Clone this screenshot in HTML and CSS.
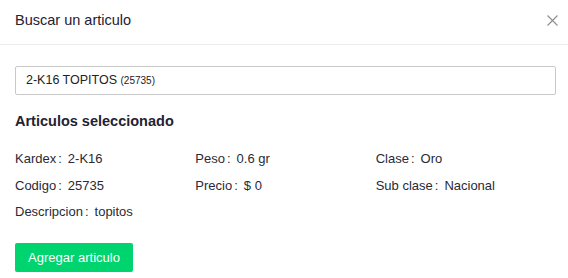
FILE: index.html
```html
<!DOCTYPE html>
<html lang="es">
<head>
<meta charset="utf-8">
<title>Buscar un articulo</title>
<link rel="stylesheet" href="styles.css">
</head>
<body>
<div class="modal">
  <div class="modal-header">
    <div class="modal-title">Buscar un articulo</div>
    <button class="modal-close" aria-label="Cerrar">
      <svg width="11" height="11" viewBox="0 0 11 11"><path d="M0.5 0.5 L10.5 10.5 M10.5 0.5 L0.5 10.5" stroke="#8c8c8c" stroke-width="1.1" fill="none"/></svg>
    </button>
  </div>
  <div class="modal-body">
    <div class="search-input">2-K16 TOPITOS <small>(25735)</small></div>
    <h3 class="section-title">Articulos seleccionado</h3>
    <div class="details">
      <div class="item"><span class="label">Kardex</span><span class="colon">:</span><span>2-K16</span></div>
      <div class="item"><span class="label">Peso</span><span class="colon">:</span><span>0.6 gr</span></div>
      <div class="item"><span class="label">Clase</span><span class="colon">:</span><span>Oro</span></div>
      <div class="item"><span class="label">Codigo</span><span class="colon">:</span><span>25735</span></div>
      <div class="item"><span class="label">Precio</span><span class="colon">:</span><span>$ 0</span></div>
      <div class="item"><span class="label">Sub clase</span><span class="colon">:</span><span>Nacional</span></div>
      <div class="item"><span class="label">Descripcion</span><span class="colon">:</span><span>topitos</span></div>
    </div>
    <button class="btn-add">Agregar articulo</button>
  </div>
</div>
</body>
</html>
```
FILE: styles.css
```css
* { box-sizing: border-box; }
html, body { margin: 0; padding: 0; background: #fff; }
body {
  font-family: "Liberation Sans", Arial, sans-serif;
  color: rgba(0, 0, 0, 0.85);
}
.modal { width: 568px; }
.modal-header {
  height: 45px;
  padding: 9px 15px 0;
  border-bottom: 1px solid #ececec;
  display: flex;
  justify-content: space-between;
  align-items: flex-start;
}
.modal-title {
  font-size: 14.5px;
  line-height: 22px;
  color: #222233;
}
.modal-close {
  border: 0;
  background: none;
  padding: 0;
  margin: 6px -5px 0 0;
  width: 11px;
  height: 11px;
  display: flex;
  cursor: pointer;
}
.modal-body { padding: 21px 12px 0 15px; }
.search-input {
  height: 29px;
  border: 1px solid #c9c9c9;
  border-radius: 2px;
  padding: 0 10px;
  font-size: 12.5px;
  line-height: 27px;
  color: #222;
}
.search-input small { font-size: 10px; }
.section-title {
  margin: 16px 0 0;
  font-size: 14.5px;
  line-height: 20px;
  font-weight: bold;
  color: #222233;
}
.details {
  margin-top: 20px;
  display: grid;
  grid-template-columns: repeat(3, 1fr);
  row-gap: 10.5px;
  font-size: 13px;
  line-height: 16px;
  color: #2a2a35;
}
.colon { margin: 0 6px 0 2px; }
.btn-add {
  margin-top: 23px;
  height: 29px;
  width: 118px;
  border: 0;
  border-radius: 2px;
  background: #00d46f;
  color: #fff;
  font-family: inherit;
  font-size: 13px;
  padding: 0;
  box-shadow: 0 2px 0 rgba(0,0,0,0.03);
}
```
